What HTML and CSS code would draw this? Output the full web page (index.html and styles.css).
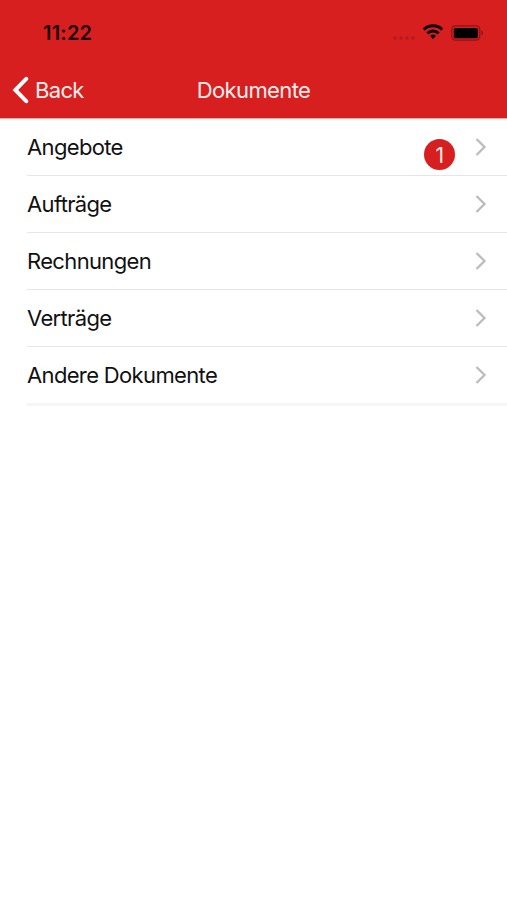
FILE: index.html
```html
<!DOCTYPE html>
<html lang="de">

<head>
    <meta charset="UTF-8">
    <meta name="viewport" content="width=device-width, initial-scale=1.0">
    <title>Dokumente</title>
    <link rel="stylesheet" href="styles.css">
</head>

<body>
    <header>
        <div class="status">
            <span class="time">11:22</span>
            <div class="statusIcons">
                <svg class="signal" width="24" height="4" viewBox="0 0 24 4">
                    <circle cx="3" cy="2" r="1.7" />
                    <circle cx="9" cy="2" r="1.7" />
                    <circle cx="15" cy="2" r="1.7" />
                    <circle cx="21" cy="2" r="1.7" />
                </svg>
                <svg class="wifi" width="22" height="16" viewBox="0 0 22 16">
                    <path d="M1.8 5.6a13.2 13.2 0 0 1 18.4 0M5.4 9.4a8 8 0 0 1 11.2 0" />
                    <path class="dot" d="M11 10.6a4 4 0 0 1 2.8 1.2L11 15.2l-2.8-3.4A4 4 0 0 1 11 10.6z" />
                </svg>
                <svg class="battery" width="33" height="16" viewBox="0 0 33 16">
                    <rect class="frame" x="0.8" y="0.8" width="28" height="14.4" rx="3.6" />
                    <rect x="2.8" y="2.9" width="24" height="10.4" rx="1.5" />
                    <path class="cap" d="M30.4 5.6c2 .6 2 4.2 0 4.8z" />
                </svg>
            </div>
        </div>
        <nav>
            <a class="back" href="#">
                <svg width="17" height="28" viewBox="0 0 17 28">
                    <path d="M14.2 2.800L3.300 14l10.900 11.200" />
                </svg>
                <span>Back</span>
            </a>
            <h1>Dokumente</h1>
        </nav>
    </header>

    <ul class="list">
        <li>
            <span class="name">Angebote</span>
            <span class="badge">1</span>
            <svg class="arrow" width="12" height="18" viewBox="0 0 12 18"><path d="M1.5 1l8 8-8 8" /></svg>
        </li>
        <li>
            <span class="name">Aufträge</span>
            <svg class="arrow" width="12" height="18" viewBox="0 0 12 18"><path d="M1.5 1l8 8-8 8" /></svg>
        </li>
        <li>
            <span class="name">Rechnungen</span>
            <svg class="arrow" width="12" height="18" viewBox="0 0 12 18"><path d="M1.5 1l8 8-8 8" /></svg>
        </li>
        <li>
            <span class="name">Verträge</span>
            <svg class="arrow" width="12" height="18" viewBox="0 0 12 18"><path d="M1.5 1l8 8-8 8" /></svg>
        </li>
        <li>
            <span class="name">Andere Dokumente</span>
            <svg class="arrow" width="12" height="18" viewBox="0 0 12 18"><path d="M1.5 1l8 8-8 8" /></svg>
        </li>
    </ul>
</body>

</html>
```

FILE: styles.css
```css
* {
    box-sizing: border-box;
}

body {
    margin: 0;
    background: #fff;
    color: #111;
    font-family: Inter, "Liberation Sans", sans-serif;
    font-size: 22px;
    letter-spacing: -0.65px;
}

header {
    height: 119px;
    background: #d71f1f;
    border-bottom: 1px solid #f3a9a6;
}

.status {
    display: flex;
    justify-content: space-between;
    align-items: center;
    height: 66px;
    padding: 0 23px 0 43px;
}

.time {
    color: #1a0202;
    font-size: 20px;
    font-weight: 600;
    letter-spacing: 0.2px;
}

.statusIcons {
    display: flex;
    align-items: center;
}

.signal {
    margin: 10px 6px 0 0;
    fill: #b01b1b;
}

.wifi {
    margin: 0 7px 2px 0;
    fill: none;
    stroke: #0c0000;
    stroke-width: 3;
}

.wifi .dot {
    fill: #0c0000;
    stroke: none;
}

.battery {
    fill: #000;
}

.battery .frame {
    fill: none;
    stroke: #8c1414;
    stroke-width: 1.2;
}

.battery .cap {
    fill: #8c1414;
}

nav {
    display: grid;
    grid-template-columns: 1fr auto 1fr;
    align-items: center;
    height: 48px;
    color: #fdeeed;
}

.back {
    display: flex;
    align-items: center;
    gap: 6px;
    padding-left: 12px;
    color: inherit;
    text-decoration: none;
}

.back svg {
    fill: none;
    stroke: #fff;
    stroke-width: 4;
    stroke-linecap: round;
}

h1 {
    margin: 0;
    font-size: 22px;
    font-weight: 400;
    letter-spacing: -0.6px;
}

.list {
    margin: 0;
    padding: 0 0 0 27px;
    list-style: none;
}

.list li {
    display: flex;
    align-items: center;
    height: 57px;
    padding-right: 20px;
    border-bottom: 1px solid #e6e6e6;
}

.list li:last-child {
    height: 59px;
    border-bottom: 3px solid #f6f6f6;
}

.name {
    flex: 1;
}

.badge {
    width: 31px;
    height: 31px;
    margin: 14px 20px 0 0;
    border-radius: 50%;
    background: #d71f1f;
    color: #fdeeed;
    font-size: 21px;
    line-height: 34px;
    text-align: center;
}

.arrow {
    fill: none;
    stroke: #bcbcbc;
    stroke-width: 2.3;
}
```
